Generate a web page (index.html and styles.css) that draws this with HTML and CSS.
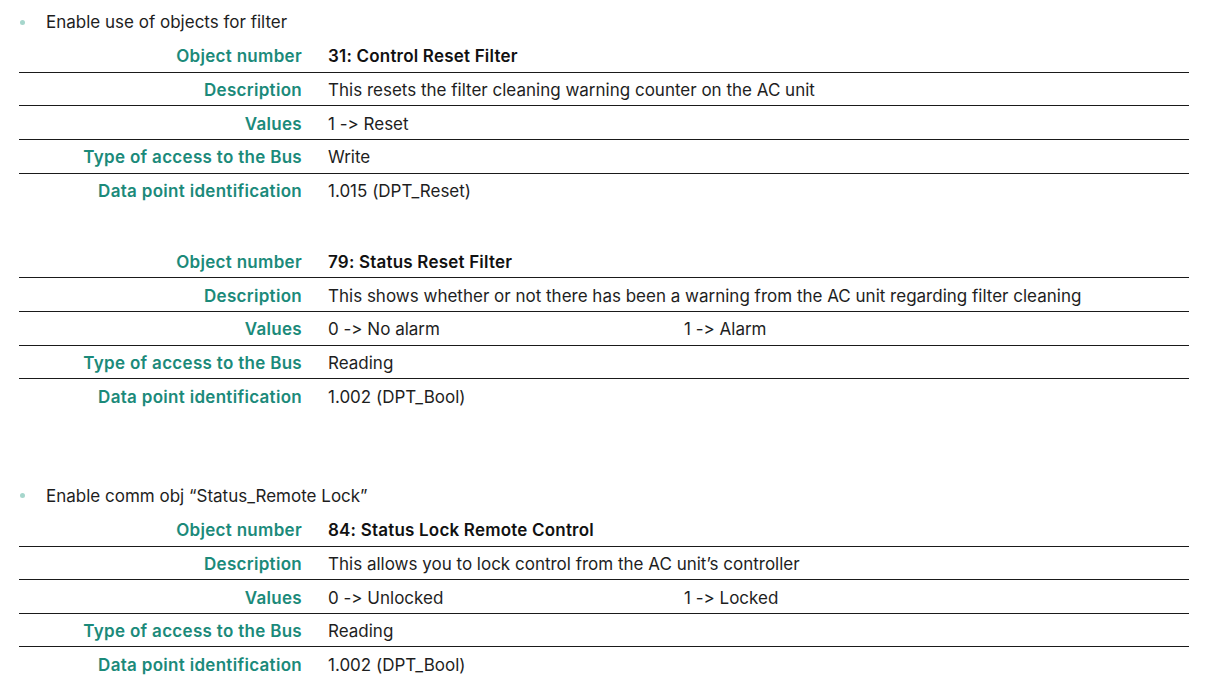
FILE: index.html
```html
<!DOCTYPE html>
<html lang="en">
<head>
<meta charset="utf-8">
<title>Filter objects</title>
<link rel="stylesheet" href="styles.css">
</head>
<body>
<div class="page">
  <div class="bullet"><span class="dot"></span><span>Enable use of objects for filter</span></div>
  <div class="table">
    <div class="row"><div class="label">Object number</div><div class="value strong">31: Control Reset Filter</div></div>
    <div class="row"><div class="label">Description</div><div class="value">This resets the filter cleaning warning counter on the AC unit</div></div>
    <div class="row"><div class="label">Values</div><div class="value">1 -&gt; Reset</div></div>
    <div class="row"><div class="label">Type of access to the Bus</div><div class="value">Write</div></div>
    <div class="row"><div class="label">Data point identification</div><div class="value">1.015 (DPT_Reset)</div></div>
  </div>
  <div class="table t2">
    <div class="row"><div class="label">Object number</div><div class="value strong">79: Status Reset Filter</div></div>
    <div class="row"><div class="label">Description</div><div class="value">This shows whether or not there has been a warning from the AC unit regarding filter cleaning</div></div>
    <div class="row"><div class="label">Values</div><div class="value split"><span class="v1">0 -&gt; No alarm</span><span>1 -&gt; Alarm</span></div></div>
    <div class="row"><div class="label">Type of access to the Bus</div><div class="value">Reading</div></div>
    <div class="row"><div class="label">Data point identification</div><div class="value">1.002 (DPT_Bool)</div></div>
  </div>
  <div class="bullet b2"><span class="dot"></span><span>Enable comm obj “Status_Remote Lock”</span></div>
  <div class="table">
    <div class="row"><div class="label">Object number</div><div class="value strong">84: Status Lock Remote Control</div></div>
    <div class="row"><div class="label">Description</div><div class="value">This allows you to lock control from the AC unit’s controller</div></div>
    <div class="row"><div class="label">Values</div><div class="value split"><span class="v1">0 -&gt; Unlocked</span><span>1 -&gt; Locked</span></div></div>
    <div class="row"><div class="label">Type of access to the Bus</div><div class="value">Reading</div></div>
    <div class="row"><div class="label">Data point identification</div><div class="value">1.002 (DPT_Bool)</div></div>
  </div>
</div>
</body>
</html>
```
FILE: styles.css
```css
html, body {
  margin: 0;
  padding: 0;
  background: #ffffff;
}
body {
  font-family: Inter, "Noto Sans", "DejaVu Sans", sans-serif;
  font-size: 17px;
  color: #1e1e1e;
  font-feature-settings: "calt" 0, "liga" 0;
  font-variant-ligatures: none;
}
.page {
  padding: 10px 42px 0 19px;
}
.bullet {
  display: flex;
  align-items: center;
  height: 24px;
  margin-bottom: 5px;
}
.bullet .dot {
  width: 5px;
  height: 5px;
  border-radius: 50%;
  background: #a6d6cc;
  margin-left: 1px;
  margin-right: 21px;
}
.b2 {
  margin-top: 71px;
}
.table {
  display: flex;
  flex-direction: column;
}
.t2 {
  margin-top: 37.3px;
}
.row {
  box-sizing: border-box;
  display: grid;
  grid-template-columns: 283px 1fr;
  column-gap: 26px;
  align-items: center;
  height: 33.67px;
  padding-top: 2px;
  border-bottom: 1px solid #1a1a1a;
}
.row:last-child {
  border-bottom: none;
}
.label {
  text-align: right;
  color: #1b8a7a;
  font-weight: 600;
  letter-spacing: 0.3px;
  white-space: nowrap;
}
.value {
  white-space: nowrap;
}
.strong {
  font-weight: 600;
  color: #111;
  letter-spacing: 0.2px;
}
.split {
  display: flex;
}
.split .v1 {
  width: 356px;
}
```
